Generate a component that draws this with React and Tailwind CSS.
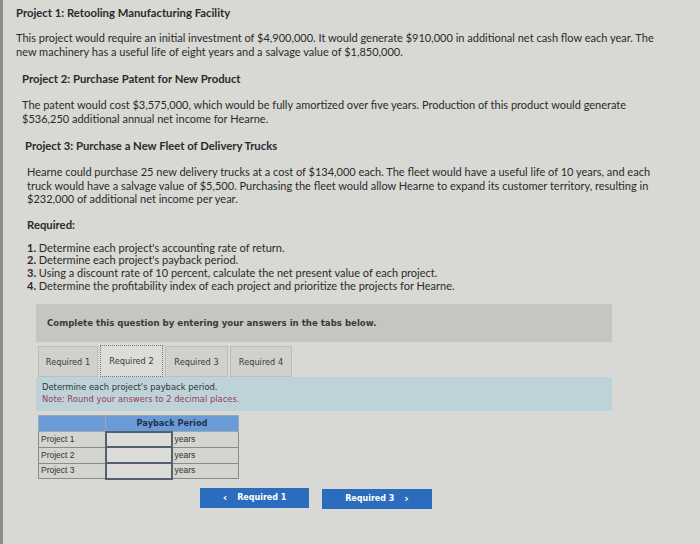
export default function App() {
  const rows = ['Project 1', 'Project 2', 'Project 3'];
  return (
    <div className="w-[700px] h-[544px] overflow-hidden bg-[#d8d8d4] border-l-[3px] border-[#8c8c8a] text-[#2b2b2b]" style={{ fontFamily: 'Lato, "Open Sans", sans-serif' }}>
      <div className="pl-[13px] pr-4 pt-[6px] text-[11px] leading-[14px]">
        <h2 className="font-bold text-[11.3px]">Project 1: Retooling Manufacturing Facility</h2>
        <p className="mt-[11px] pr-[9px]">
          This project would require an initial investment of $4,900,000. It would generate $910,000 in additional net cash flow each year. The new machinery has a useful life of eight years and a salvage value of $1,850,000.
        </p>
        <h2 className="font-bold text-[11.3px] mt-[13px] pl-[6px]">Project 2: Purchase Patent for New Product</h2>
        <p className="mt-[12px] pl-[6px] pr-[50px]">
          The patent would cost $3,575,000, which would be fully amortized over five years. Production of this product would generate $536,250 additional annual net income for Hearne.
        </p>
        <h2 className="font-bold text-[11.3px] mt-[13px] pl-[9px]">Project 3: Purchase a New Fleet of Delivery Trucks</h2>
        <p className="mt-[12px] pl-[11px] pr-[20px] leading-[13.5px]">
          Hearne could purchase 25 new delivery trucks at a cost of $134,000 each. The fleet would have a useful life of 10 years, and each truck would have a salvage value of $5,500. Purchasing the fleet would allow Hearne to expand its customer territory, resulting in $232,000 of additional net income per year.
        </p>
        <h2 className="font-bold text-[11.3px] mt-[12px] pl-[11px]">Required:</h2>
        <ol className="mt-[10px] pl-[11px] leading-[12.7px]">
          <li><span className="font-bold">1.</span> Determine each project's accounting rate of return.</li>
          <li><span className="font-bold">2.</span> Determine each project's payback period.</li>
          <li><span className="font-bold">3.</span> Using a discount rate of 10 percent, calculate the net present value of each project.</li>
          <li><span className="font-bold">4.</span> Determine the profitability index of each project and prioritize the projects for Hearne.</li>
        </ol>
      </div>

      <div className="ml-[33px] w-[576px] mt-[12px]" style={{ fontFamily: '"DejaVu Sans", Verdana, sans-serif' }}>
        <div className="h-[38px] bg-[#c5c5c1] flex items-center pl-[11px] text-[8.6px] font-bold text-[#3a3a3a]">
          Complete this question by entering your answers in the tabs below.
        </div>
        <div className="flex items-end gap-[2px] mt-[3px] pl-[2px] text-[8.2px] text-[#3a3a3a]">
          <div className="w-[60px] h-[31px] flex items-center justify-center bg-[#d0d0cc] border border-[#bdbdb9]">Required 1</div>
          <div className="w-[63px] h-[32px] flex items-center justify-center bg-[#dcdcd8] border border-dotted border-[#777]">Required 2</div>
          <div className="w-[63px] h-[31px] flex items-center justify-center bg-[#d0d0cc] border border-[#bdbdb9]">Required 3</div>
          <div className="w-[62px] h-[31px] flex items-center justify-center bg-[#d0d0cc] border border-[#bdbdb9]">Required 4</div>
        </div>
        <div className="h-[34px] bg-[#bdd2d9] pl-[6px] pt-[5px] text-[8.4px] leading-[11.5px]">
          <div className="text-[#333]">Determine each project's payback period.</div>
          <div className="text-[#9a4054]">Note: Round your answers to 2 decimal places.</div>
        </div>
        <table className="mt-[4px] ml-[2px] border-collapse text-[8.5px] text-[#333]" style={{ fontFamily: '"Liberation Sans", Arial, sans-serif' }}>
          <thead>
            <tr className="h-[16px] bg-[#6b9bd6]">
              <th className="w-[67px] border border-[#9aa9b8]"></th>
              <th colSpan={2} className="w-[133px] border border-[#9aa9b8] font-bold text-[#1f3350] text-[8.2px]" style={{ fontFamily: '"DejaVu Sans", Verdana, sans-serif' }}>Payback Period</th>
            </tr>
          </thead>
          <tbody>
            {rows.map((r) => (
              <tr key={r} className="h-[15.6px]">
                <td className="border border-[#8a8a8a] pl-[2px] bg-[#d4d4d0]">{r}</td>
                <td className="w-[66px] border-2 border-[#55606e] bg-[#dcdcd8]"></td>
                <td className="w-[67px] border border-[#8a8a8a] pl-[2px] bg-[#d4d4d0]">years</td>
              </tr>
            ))}
          </tbody>
        </table>
        <div className="flex gap-[13px] ml-[164px] mt-[8px] text-[8px] font-bold text-white">
          <div className="w-[109px] h-[20px] bg-[#2c6cbf] flex items-center justify-center gap-[10px]">
            <span className="text-[11px] leading-none">‹</span>
            <span>Required 1</span>
          </div>
          <div className="w-[110px] h-[20px] mt-[1px] bg-[#2c6cbf] flex items-center justify-center gap-[10px]">
            <span>Required 3</span>
            <span className="text-[11px] leading-none">›</span>
          </div>
        </div>
      </div>
    </div>
  );
}
